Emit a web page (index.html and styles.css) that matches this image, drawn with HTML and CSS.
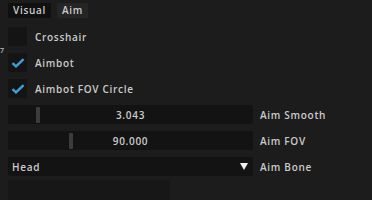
FILE: index.html
```html
<!DOCTYPE html>
<html lang="en">
<head>
    <meta charset="UTF-8">
    <title>menu</title>
    <link rel="stylesheet" href="styles.css">
</head>
<body>
    <div class="menu">
        <span class="stray">7</span>
        <div class="tabs">
            <div class="tab active">Visual</div>
            <div class="tab">Aim</div>
        </div>

        <div class="items">
            <div class="row">
                <div class="checkbox"></div>
                <span class="label">Crosshair</span>
            </div>
            <div class="row">
                <div class="checkbox">
                    <svg class="check" viewBox="0 0 14 10" width="14" height="10">
                        <path d="M1.5 5.2 L5 8.4 L12.6 1.2" fill="none" stroke="#3f9fda" stroke-width="2.4"/>
                    </svg>
                </div>
                <span class="label">Aimbot</span>
            </div>
            <div class="row">
                <div class="checkbox">
                    <svg class="check" viewBox="0 0 14 10" width="14" height="10">
                        <path d="M1.5 5.2 L5 8.4 L12.6 1.2" fill="none" stroke="#3f9fda" stroke-width="2.4"/>
                    </svg>
                </div>
                <span class="label">Aimbot FOV Circle</span>
            </div>

            <div class="row">
                <div class="frame slider">
                    <div class="grab" style="margin-left: 28px"></div>
                    <span class="value">3.043</span>
                </div>
                <span class="label side">Aim Smooth</span>
            </div>
            <div class="row">
                <div class="frame slider">
                    <div class="grab" style="margin-left: 61px"></div>
                    <span class="value">90.000</span>
                </div>
                <span class="label side">Aim FOV</span>
            </div>
            <div class="row">
                <div class="frame combo">
                    <span class="combo-text">Head</span>
                    <span class="arrow"></span>
                </div>
                <span class="label side">Aim Bone</span>
            </div>
        </div>

        <div class="child"></div>
    </div>
</body>
</html>
```

FILE: styles.css
```css
* {
    box-sizing: border-box;
    margin: 0;
    padding: 0;
}

body {
    background: #1c1c1c;
    font-family: "Open Sans", "Liberation Sans", sans-serif;
    font-weight: 600;
    font-size: 10px;
    letter-spacing: 0.7px;
    color: #cbcbcb;
    overflow: hidden;
}

.menu {
    position: relative;
    width: 372px;
    height: 200px;
    padding: 3px 0 0 8px;
}

.stray {
    position: absolute;
    left: 0;
    top: 46px;
    font-size: 7px;
    color: #bdbdbd;
}

.tabs {
    display: flex;
    gap: 6px;
    height: 15px;
}

.tab {
    padding: 0 5px;
    line-height: 15px;
    background: #252525;
}

.tab.active {
    background: #101010;
}

.items {
    display: flex;
    flex-direction: column;
    gap: 7px;
    margin-top: 9px;
}

.row {
    display: flex;
    align-items: center;
    height: 19px;
}

.checkbox {
    width: 19px;
    height: 19px;
    background: #141414;
    display: flex;
    align-items: center;
    justify-content: center;
}

.checkbox + .label {
    margin-left: 8px;
}

.frame {
    width: 245px;
    height: 19px;
    background: #131313;
    border-radius: 2px;
    position: relative;
    display: flex;
    align-items: center;
}

.grab {
    width: 4px;
    height: 16px;
    background: #3c3c3c;
    border-radius: 1px;
}

.value {
    position: absolute;
    left: 0;
    right: 0;
    text-align: center;
}

.combo {
    justify-content: space-between;
    padding: 0 5px 0 4px;
}

.arrow {
    width: 0;
    height: 0;
    border-left: 4px solid transparent;
    border-right: 4px solid transparent;
    border-top: 7px solid #f0f0f0;
}

.side {
    margin-left: 7px;
}

.child {
    width: 162px;
    height: 24px;
    margin-top: 4px;
    background: #171717;
}
```
